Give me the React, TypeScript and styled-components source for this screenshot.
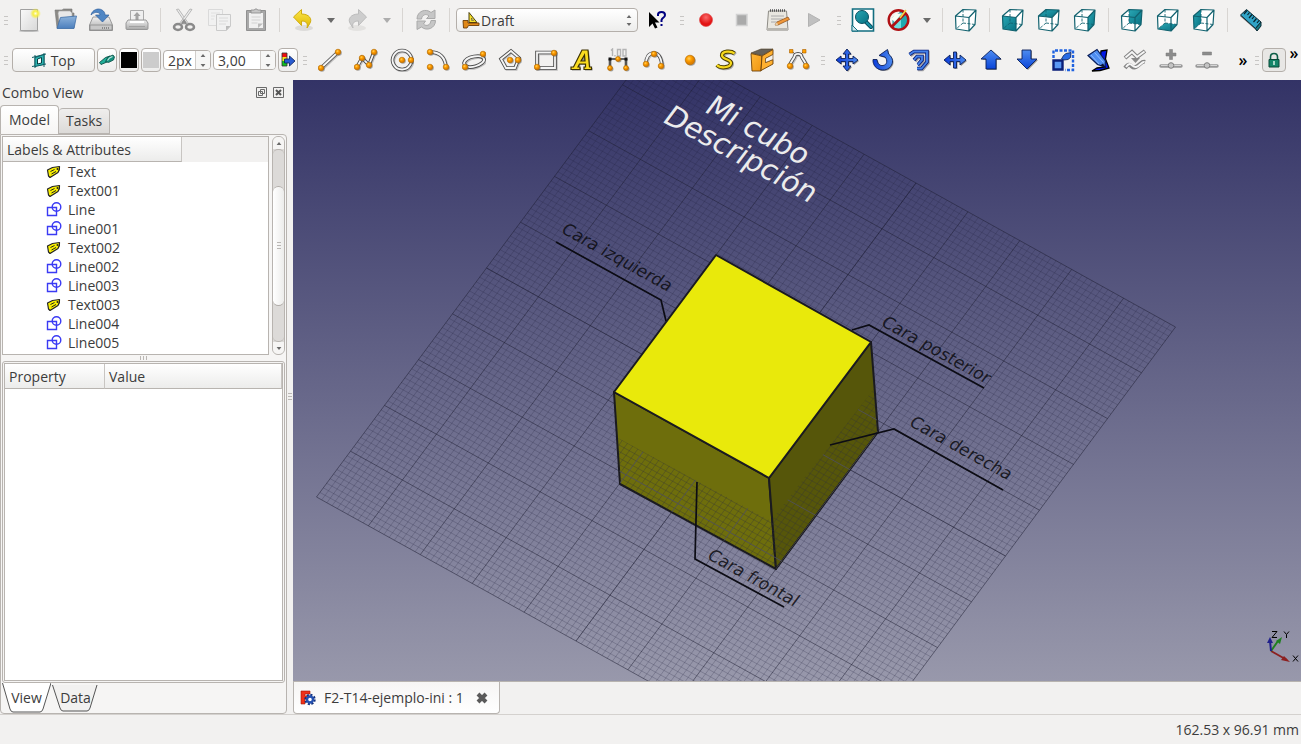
import React, { ReactNode, useState } from "react";
import styled, { createGlobalStyle, css } from "styled-components";

const GlobalStyle = createGlobalStyle`
  *, *::before, *::after { box-sizing: border-box; }
  body {
    margin: 0;
    background: #f2f1f0;
    color: #3c3c3c;
    font-family: "Open Sans", "Noto Sans", sans-serif;
    font-size: 14px;
    line-height: 19px;
  }
  button, input, select {
    font: inherit;
    color: inherit;
    margin: 0;
    padding: 0;
  }
`;

/* ---------- layout ---------- */

const Window = styled.div`
  display: flex;
  flex-direction: column;
  height: 100vh;
  overflow: hidden;
`;

const Toolbar = styled.div`
  display: flex;
  align-items: center;
  height: 40px;
  flex: none;
  overflow: hidden;
`;

const Workspace = styled.main`
  display: flex;
  flex: 1;
  min-height: 0;
`;

const Dock = styled.aside`
  display: flex;
  flex-direction: column;
  width: 287px;
  flex: none;
`;

const VerticalSplitter = styled.div`
  display: flex;
  align-items: center;
  justify-content: center;
  width: 6px;
  flex: none;
`;

const Documents = styled.section`
  display: flex;
  flex-direction: column;
  flex: 1;
  min-width: 0;
`;

const StatusBar = styled.footer`
  display: flex;
  align-items: center;
  justify-content: flex-end;
  height: 30px;
  flex: none;
  padding-right: 2px;
  border-top: 1px solid #d4d1ce;
`;

/* ---------- toolbar parts ---------- */

const Handle = styled.span<{ $width: number }>`
  display: block;
  flex: none;
  width: ${(p) => p.$width}px;
  height: 9px;
  background: repeating-linear-gradient(#c8c6c4 0 1px, transparent 1px 4px) center / 4px 9px no-repeat;
`;

const Separator = styled.span`
  flex: none;
  width: 1px;
  height: 24px;
  margin: 0 5px;
  background: #d8d5d2;
`;

const ToolButton = styled.button<{ $narrow?: boolean }>`
  display: flex;
  align-items: center;
  justify-content: center;
  flex: none;
  width: ${(p) => (p.$narrow ? 20 : 36)}px;
  height: 36px;
  border: 0;
  background: none;
`;

const raised = css`
  border: 1px solid #b4afaa;
  border-radius: 4px;
  background: linear-gradient(#ffffff, #ededec);
`;

const PlaneButton = styled.button`
  ${raised}
  display: flex;
  align-items: center;
  justify-content: center;
  gap: 4px;
  width: 83px;
  height: 24px;
`;

const SmallButton = styled.button`
  ${raised}
  display: flex;
  align-items: center;
  justify-content: center;
  flex: none;
  width: 20px;
  height: 24px;
`;

const LockButton = styled(SmallButton)`
  width: 24px;
  background: #e8e7e5;
`;

const Swatch = styled.span<{ $color: string }>`
  flex: none;
  width: 16px;
  height: 16px;
  background: ${(p) => p.$color};
`;

const DraftOptions = styled.div`
  display: flex;
  align-items: center;
  gap: 2px;
  flex: none;
`;

const SpinFrame = styled.div<{ $width: number }>`
  display: flex;
  width: ${(p) => p.$width}px;
  height: 20px;
  border: 1px solid #b4afaa;
  border-radius: 4px;
  background: #ffffff;
  overflow: hidden;
`;

const SpinInput = styled.input`
  flex: 1;
  min-width: 0;
  border: 0;
  padding-left: 4px;
  outline: 0;
  background: none;
`;

const SpinArrows = styled.div`
  display: flex;
  flex-direction: column;
  justify-content: space-between;
  width: 15px;
  padding: 3px 0 2px;
  border-left: 1px solid #d0cdca;
  background: #f6f6f5;
`;

const SpinButton = styled.button`
  display: flex;
  justify-content: center;
  border: 0;
  background: none;
`;

const Combo = styled.label`
  position: relative;
  display: flex;
  align-items: center;
  flex: none;
  width: 182px;
  height: 24px;
  margin: 0 1px;
  ${raised}
`;

const ComboIcon = styled.span`
  position: absolute;
  left: 5px;
  display: flex;
  pointer-events: none;
`;

const ComboArrows = styled.span`
  position: absolute;
  right: 5px;
  display: flex;
  flex-direction: column;
  gap: 5px;
  pointer-events: none;
`;

const ComboSelect = styled.select`
  appearance: none;
  width: 100%;
  height: 100%;
  padding-left: 24px;
  border: 0;
  outline: 0;
  background: none;
`;

const Overflow = styled.button`
  flex: none;
  width: 26px;
  height: 36px;
  padding-left: 10px;
  border: 0;
  background: none;
  color: #000000;
  font-size: 16px;
  font-weight: 600;
`;

const CornerOverflow = styled(Overflow)`
  align-self: flex-start;
  width: 16px;
  height: 26px;
  padding-left: 0;
`;

/* ---------- dock parts ---------- */

const DockTitle = styled.header`
  display: flex;
  align-items: center;
  gap: 6px;
  height: 25px;
  flex: none;
  padding: 0 3px 0 2px;
`;

const DockName = styled.h2`
  flex: 1;
  margin: 0;
  font-size: 14px;
  font-weight: 400;
`;

const DockButton = styled.button`
  display: flex;
  width: 11px;
  height: 11px;
  border: 0;
  background: none;
`;

const DockTabs = styled.div`
  display: flex;
  align-items: flex-end;
  height: 29px;
  flex: none;
`;

const DockTab = styled.button<{ $active: boolean }>`
  height: ${(p) => (p.$active ? 29 : 26)}px;
  padding: 0 ${(p) => (p.$active ? 8 : 7)}px 1px;
  border: 1px solid #b8b4b0;
  border-radius: 4px 4px 0 0;
  border-bottom-width: ${(p) => (p.$active ? 0 : 1)}px;
  border-left-width: ${(p) => (p.$active ? 1 : 0)}px;
  background: ${(p) => (p.$active ? "linear-gradient(#ffffff, #f6f5f4)" : "linear-gradient(#efeeed, #dcdad8)")};
`;

const DockPane = styled.div`
  display: flex;
  flex-direction: column;
  flex: 1;
  min-height: 0;
  padding: 1px 1px 0;
  border: 1px solid #b8b4b0;
  border-radius: 0 4px 4px 4px;
  background: #f6f5f4;
`;

const TreeFrame = styled.div`
  display: flex;
  gap: 3px;
  height: 219px;
  flex: none;
`;

const Tree = styled.div`
  flex: 1;
  border: 1px solid #b8b4b0;
  background: #ffffff;
  overflow: hidden;
`;

const TreeHeader = styled.div`
  height: 25px;
  background: #f2f1f0;
`;

const TreeColumn = styled.div`
  width: 179px;
  height: 25px;
  padding: 3px 4px;
  border-right: 1px solid #c8c5c2;
  border-bottom: 1px solid #b8b4b0;
  background: linear-gradient(#ffffff, #ececeb);
`;

const TreeList = styled.ul`
  margin: 0;
  padding: 0;
  list-style: none;
`;

const TreeItem = styled.li`
  display: flex;
  align-items: center;
  gap: 6px;
  height: 19px;
  padding-left: 43px;
`;

const ScrollBar = styled.div`
  display: flex;
  flex-direction: column;
  width: 13px;
  border: 1px solid #b8b4b0;
  border-radius: 6px;
  background: #dcdad8;
  overflow: hidden;
`;

const ScrollButton = styled.button`
  display: flex;
  align-items: center;
  justify-content: center;
  height: 12px;
  border: 0;
  background: #f6f5f4;
`;

const ScrollTrack = styled.div`
  flex: 1;
  padding-top: 36px;
  border: 1px solid #b8b4b0;
  border-width: 1px 0;
  border-radius: 5px;
`;

const ScrollThumb = styled.div`
  display: flex;
  align-items: center;
  justify-content: center;
  height: 120px;
  border: 1px solid #b0aca8;
  border-width: 1px 0;
  border-radius: 6px;
  background: linear-gradient(90deg, #ffffff, #ececeb);
`;

const Splitter = styled.div`
  display: flex;
  align-items: center;
  justify-content: center;
  height: 6px;
  flex: none;
`;

const Grip = styled.span<{ $vertical?: boolean }>`
  width: ${(p) => (p.$vertical ? 4 : 8)}px;
  height: ${(p) => (p.$vertical ? 8 : 4)}px;
  background: repeating-linear-gradient(${(p) => (p.$vertical ? "180deg" : "90deg")}, #bab7b4 0 1px, transparent 1px 3px);
`;

const PropertyFrame = styled.div`
  flex: 1;
  min-height: 0;
  padding: 1px;
  border: 1px solid #b8b4b0;
  border-radius: 3px;
`;

const PropertyPanel = styled.div`
  height: 100%;
  border: 1px solid #b8b4b0;
  background: #ffffff;
`;

const PropertyTable = styled.table`
  width: 100%;
  border-collapse: separate;
  border-spacing: 0;
  table-layout: fixed;
`;

const PropertyHead = styled.th<{ $width?: number }>`
  width: ${(p) => (p.$width ? `${p.$width}px` : "auto")};
  height: 25px;
  padding: 0 4px;
  border-right: 1px solid #c8c5c2;
  border-bottom: 1px solid #b8b4b0;
  background: linear-gradient(#ffffff, #ececeb);
  font-weight: 400;
  text-align: left;
`;

const PropertyTabs = styled.div`
  display: flex;
  height: 30px;
  flex: none;
`;

const PropertyTab = styled.button`
  position: relative;
  width: 49px;
  height: 28px;
  border: 0;
  background: none;
`;

const TabShape = styled.svg`
  position: absolute;
  left: 0;
  top: 0;
`;

const TabText = styled.span`
  position: relative;
`;

/* ---------- document view ---------- */

const Viewport = styled.div`
  position: relative;
  flex: 1;
  min-height: 0;
  background: linear-gradient(#333366, #9898ab);
  overflow: hidden;
`;

const Scene = styled.svg`
  display: block;
  width: 100%;
  height: 100%;
`;

const AxisCross = styled.svg`
  position: absolute;
  right: 0;
  bottom: 12px;
`;

const DocumentTabs = styled.div`
  display: flex;
  height: 33px;
  flex: none;
  border-top: 1px solid #b8b4b0;
`;

const DocumentTab = styled.div`
  display: flex;
  align-items: center;
  gap: 8px;
  width: 207px;
  height: 32px;
  padding: 0 10px 0 6px;
  border: 1px solid #b8b4b0;
  border-top: 0;
  border-radius: 0 0 4px 4px;
  background: linear-gradient(#f6f5f4, #ffffff);
`;

const DocumentName = styled.button`
  flex: 1;
  border: 0;
  background: none;
  text-align: left;
  white-space: nowrap;
`;

const CloseButton = styled.button`
  display: flex;
  border: 0;
  background: none;
`;

/* ---------- icons ---------- */

const Svg = ({ children, size = 24, box = 24 }: { children: ReactNode; size?: number; box?: number }) => (
  <svg width={size} height={size} viewBox={`0 0 ${box} ${box}`} aria-hidden="true">
    {children}
  </svg>
);

const Caret = ({ up, small, color = "#6a6a6a" }: { up?: boolean; small?: boolean; color?: string }) => (
  <svg width={small ? 6 : 8} height={small ? 3 : 5} viewBox="0 0 8 5" aria-hidden="true">
    <path d={up ? "M4 0 8 5H0z" : "M0 0h8L4 5z"} fill={color} />
  </svg>
);

const HiddenDefs = styled.svg`
  position: absolute;
`;

const Defs = () => (
  <HiddenDefs width="0" height="0" aria-hidden="true">
    <defs>
      <linearGradient id="paper" x1="0" y1="0" x2="1" y2="1">
        <stop offset="0" stopColor="#fafafa" />
        <stop offset="1" stopColor="#d8d8d8" />
      </linearGradient>
      <radialGradient id="glow">
        <stop offset="0" stopColor="#fffde0" />
        <stop offset=".45" stopColor="#f6ee40" />
        <stop offset="1" stopColor="#f6ee40" stopOpacity="0" />
      </radialGradient>
      <linearGradient id="folder" x1="0" y1="0" x2="0" y2="1">
        <stop offset="0" stopColor="#8fb4dc" />
        <stop offset="1" stopColor="#4c7fbd" />
      </linearGradient>
      <linearGradient id="metal" x1="0" y1="0" x2="0" y2="1">
        <stop offset="0" stopColor="#f0f0f0" />
        <stop offset="1" stopColor="#a8a8a8" />
      </linearGradient>
      <linearGradient id="gold" x1="0" y1="0" x2="0" y2="1">
        <stop offset="0" stopColor="#fbe64c" />
        <stop offset="1" stopColor="#e0b800" />
      </linearGradient>
      <linearGradient id="blue" x1="0" y1="0" x2="1" y2="0">
        <stop offset="0" stopColor="#0b3bd8" />
        <stop offset="1" stopColor="#4d8cf0" />
      </linearGradient>
      <linearGradient id="blueDown" x1="0" y1="0" x2="0" y2="1">
        <stop offset="0" stopColor="#4d8cf0" />
        <stop offset="1" stopColor="#0b45d8" />
      </linearGradient>
      <linearGradient id="teal" x1="0" y1="0" x2="1" y2="1">
        <stop offset="0" stopColor="#2aa7b4" />
        <stop offset="1" stopColor="#077182" />
      </linearGradient>
      <linearGradient id="orange" x1="0" y1="0" x2="1" y2="1">
        <stop offset="0" stopColor="#ffb838" />
        <stop offset="1" stopColor="#f09410" />
      </linearGradient>
      <radialGradient id="dot" cx=".4" cy=".35">
        <stop offset="0" stopColor="#ffd060" />
        <stop offset=".5" stopColor="#ffa000" />
        <stop offset="1" stopColor="#e08000" />
      </radialGradient>
      <radialGradient id="record" cx=".5" cy=".3">
        <stop offset="0" stopColor="#fa6a6a" />
        <stop offset="1" stopColor="#e21414" />
      </radialGradient>
    </defs>
  </HiddenDefs>
);

const NewIcon = () => (
  <Svg>
    <ellipse cx="12" cy="23" rx="10" ry="1" fill="#bbb" />
    <path d="M3.500 1.500h17v21h-17z" fill="url(#paper)" stroke="#a0a0a0" />
    <circle cx="18.500" cy="5.500" r="5.500" fill="url(#glow)" />
  </Svg>
);

const OpenIcon = () => (
  <Svg>
    <path d="M2 2h7l1.500-1H19v4h2v15H4z" fill="#8b8985" stroke="#777" strokeWidth=".6" />
    <path d="M5 5 6 3h11l2 2v8H6z" fill="#e8e8e8" stroke="#aaa" strokeWidth=".6" />
    <path d="M7.500 9.500 23.500 8 21 20.500H4z" fill="url(#folder)" stroke="#3f6ea8" strokeWidth=".8" />
  </Svg>
);

const SaveIcon = () => (
  <Svg>
    <path d="M4 9h16l3.500 8v5.500H.5V17z" fill="url(#metal)" stroke="#888" strokeWidth=".8" />
    <path d="M1 17h22v5H1z" fill="#c8c8c8" stroke="#8a8a8a" strokeWidth=".8" />
    <path d="M13 20h8" stroke="#8a8a8a" strokeWidth="2" strokeDasharray="1 1" />
    <path d="M2 7C3 2 9-.5 13 2c2 1 3 3 3 5h4l-6.500 7L6.500 7H11c0-3-5-4-9 0z" fill="#4f86c4" stroke="#2f5f9c" strokeWidth=".7" />
  </Svg>
);

const PrintIcon = () => (
  <Svg>
    <path d="M5.500 2.500h13V14h-13z" fill="#efefef" stroke="#aaa" />
    <path d="m12 4 3.500 4h-2v4h-3V8h-2z" fill="#a2a2a2" />
    <path d="M3 12h18l2 3v5.500q0 1-1 1H2q-1 0-1-1V15z" fill="url(#metal)" stroke="#909090" strokeWidth=".9" />
    <path d="M5 14h14" stroke="#fff" strokeWidth="2" />
    <path d="M4 18.500h16" stroke="#a2a2a2" />
  </Svg>
);

const CutIcon = () => (
  <Svg>
    <path d="M4.500 1.500 15 17l1.500-1.500L6.500 1z" fill="#ececec" stroke="#aaa" strokeWidth=".8" />
    <path d="M20 1.500 9 17l-1.500-1.500L18 1z" fill="#ececec" stroke="#aaa" strokeWidth=".8" />
    <path d="m10 16 2-3 2 3" fill="none" stroke="#8f8f8f" strokeWidth="2.500" />
    <ellipse cx="6" cy="19" rx="4" ry="3" fill="none" stroke="#8a8a8a" strokeWidth="2.500" />
    <ellipse cx="18" cy="19" rx="4" ry="3" fill="none" stroke="#8a8a8a" strokeWidth="2.500" />
  </Svg>
);

const CopyIcon = () => (
  <Svg>
    <path d="M.500 1.500h14v16H.500z" fill="#f1f1f1" stroke="#dadada" />
    <path d="M3 5h9M3 8h4M3 11h3" stroke="#e0e0e0" />
    <path d="M8.500 6.500h14V18l-4 4.500h-10z" fill="#f1f1f1" stroke="#cacaca" />
    <path d="M11 10h9M11 13h9M11 16h7" stroke="#dadada" />
    <path d="M18 22.500V18h4.500z" fill="#bbb" />
  </Svg>
);

const PasteIcon = () => (
  <Svg>
    <path d="M2.500 2.500h19v20h-19z" fill="#a8a8a8" stroke="#909090" />
    <path d="M5 5h14v15H5z" fill="#f0f0f0" />
    <path d="M7.500 9h9M7.500 12h9M7.500 15h6" stroke="#d2d2d2" />
    <path d="M14 20v-4.500h5z" fill="#bcbcbc" />
    <path d="M7 5V2h3q2-2.500 4 0h3v3z" fill="#c6c6c6" stroke="#888" strokeWidth=".8" />
  </Svg>
);

const UndoIcon = () => (
  <Svg>
    <ellipse cx="13" cy="20" rx="9" ry="3" fill="#dcdbd9" />
    <path d="M10.500 1.500V6C18 6 22 11 18.500 16l-2.500 4c1-4 0-7-5.500-7v4.500L2.500 9z" fill="url(#gold)" stroke="#d0ac10" />
  </Svg>
);

const RedoIcon = () => (
  <Svg>
    <ellipse cx="10" cy="20" rx="9" ry="3" fill="#e3e2e0" />
    <path d="M11.500 1.500V6C4 6 0 11 3.500 16L6 20c-1-4 0-7 5.500-7v4.500L19.500 9z" fill="#cdcdcd" stroke="#bcbcbc" />
  </Svg>
);

const RefreshIcon = () => (
  <Svg>
    <path d="M3 11C3 3 12 0 17 4.500L21 2v8.500h-8.500L15 8c-3-3-7-1-7.500 3z" fill="#c6c6c6" stroke="#aaa" />
    <path d="M21.500 12.500c0 8-9 11-14 6.500L3 21.500V13h8.500L9.500 16c3 3 7 1 7.500-3.500z" fill="#c6c6c6" stroke="#aaa" />
  </Svg>
);

const DraftIcon = () => (
  <Svg size={18} box={18}>
    <path d="M7 1.500v10h8z" fill="#f6e02a" stroke="#4a4010" />
    <path d="m9.500 7 .1 2.500h2z" fill="#fff" stroke="#4a4010" strokeWidth=".6" />
    <path d="M1 9.500h5V12h11v2.500H6.500L5 17H1.500z" fill="#e08818" stroke="#6b3d08" strokeWidth=".9" />
  </Svg>
);

const WhatsThisIcon = () => (
  <Svg>
    <path d="M4 4v15l3.500-3.500L10 20.500l2.500-1L10 14.500h4.500z" fill="#000" />
    <path d="M13 8V6.500q0-2.500 3.500-2.500t3.500 3q0 1.500-1.500 2.500T16.500 12v2M16.500 16v2" fill="none" stroke="#000080" strokeWidth="2" />
  </Svg>
);

const RecordIcon = () => (
  <Svg>
    <circle cx="12" cy="12" r="6.500" fill="url(#record)" stroke="#d44" strokeWidth=".6" />
  </Svg>
);

const StopIcon = () => (
  <Svg>
    <path d="M6.500 6.500h10.500v11H6.500z" fill="#aaa" stroke="#d2d2d2" strokeWidth="1.500" />
  </Svg>
);

const NotesIcon = () => (
  <Svg>
    <path d="M2.500 3h18L22 22H1z" fill="#e9e7e0" stroke="#8e8c86" />
    <path d="M1 20h21v2.500H1z" fill="#b8b6b0" />
    <path d="M5 8h13M5 11h12M5 14h8" stroke="#aaa" />
    <path d="M4 2.500h16" stroke="#555" strokeWidth="2.500" strokeDasharray="1 1" />
    <path d="m9 17 2-3L22 9l1.500 2.500L12 17z" fill="#f0983a" stroke="#8a4a12" strokeWidth=".7" />
    <path d="m9 17 2-3 1 3z" fill="#e8d0a8" />
  </Svg>
);

const PlayIcon = () => (
  <Svg>
    <path d="M6.500 5.500v13L18 12z" fill="#c0c0c0" stroke="#b2b2b2" />
  </Svg>
);

const FitIcon = () => (
  <Svg>
    <path d="M1.500 1v22H22.500V1z" fill="#fff" stroke="#126e80" strokeWidth="1.600" />
    <path d="M1 23v-6l6 6z" fill="#cfe6ea" stroke="#126e80" />
    <path d="m14 13 6 6" stroke="#0c5262" strokeWidth="4" strokeLinecap="round" />
    <path d="m14 13 6 6" stroke="#1893a8" strokeWidth="2" strokeLinecap="round" />
    <circle cx="11" cy="9" r="6.500" fill="url(#teal)" stroke="#0c5262" />
  </Svg>
);

const DrawStyleIcon = () => (
  <Svg>
    <path d="m6 9 8-5 6 2v11l-8 5-6-2z" fill="#6fdde0" stroke="#15868c" />
    <path d="m14 10 6-4v11l-6 4z" fill="#1fa9b0" />
    <path d="m4 11 5-6 5 1-6 8z" fill="#fbfbf4" />
    <circle cx="11.500" cy="12" r="9.800" fill="none" stroke="#b01014" strokeWidth="2.400" />
    <path d="M18.500 5 4.500 19" stroke="#b01014" strokeWidth="2.600" />
    <path d="m19 2-6 8" stroke="#f4d840" strokeWidth="1.600" />
  </Svg>
);

const cubeFaces: Record<string, string> = {
  front: "M1.500 8 15 9.500V23L2 21z",
  top: "M1.500 8 15 9.500 22 2 9 1.500z",
  right: "M15 9.500 22 2l-1 14.500L15 23z",
  rear: "M9 1.500 22 2l-1 14.500L9 15z",
  bottom: "M2 21 15 23l6-6.500L9 15z",
  left: "M1.500 8 9 1.500V15L2 21z",
};

const CubeIcon = ({ face }: { face?: string }) => (
  <Svg>
    <path d="M1.500 8 9 1.500 22 2l-1 14.500L15 23 2 21z" fill="#fff" />
    {face && <path d={cubeFaces[face]} fill="url(#teal)" />}
    <path d="M9 1.500V15L2 21M9 15l12 1.500" fill="none" stroke="#12626f" strokeWidth=".9" strokeDasharray="3 1.500" />
    <path d="M1.500 8 9 1.500 22 2l-1 14.500L15 23 2 21zM1.500 8 15 9.500 22 2M15 9.500V23" fill="none" stroke="#12626f" strokeWidth="1.200" strokeLinejoin="round" />
  </Svg>
);

const MeasureIcon = () => (
  <Svg>
    <path d="M1 8 5 5l13 12 3 2-3 4z" fill="#111" opacity=".6" />
    <path d="M1.500 7 7.500 1.500 22 14l-5.500 6.500z" fill="#2fa3c6" stroke="#0d2c36" />
    <path d="m16.500 20.500 5.500-6.500v4l-4 5z" fill="#167a86" stroke="#0d2c36" />
    <path d="M8 2.500 5 6M10.500 4.500 8.500 7M13 6.500 10 10M15 8.500 13 11M17.500 10.500l-3 3.500M20 12.500 18 15" stroke="#06222c" strokeWidth="1.200" />
  </Svg>
);

/* A draft primitive: grey double outline with orange control points. */
const Outline = ({ d }: { d: string }) => (
  <>
    <path d={d} fill="none" stroke="#8c8c8c" strokeWidth="3.500" opacity=".5" transform="translate(1 1)" />
    <path d={d} fill="none" stroke="#4e4e4e" strokeWidth="3.600" />
    <path d={d} fill="none" stroke="#f6f6f6" strokeWidth="1.800" />
  </>
);

const Dots = ({ at, r = 2.8 }: { at: [number, number][]; r?: number }) => (
  <>
    {at.map(([x, y]) => (
      <g key={`${x},${y}`}>
        <circle cx={x + 1} cy={y + 1} r={r} fill="#555" opacity=".5" />
        <circle cx={x} cy={y} r={r} fill="url(#dot)" stroke="#b06a00" strokeWidth=".6" />
      </g>
    ))}
  </>
);

const DraftShape = ({ d, dots }: { d: string; dots: [number, number][] }) => (
  <Svg>
    <Outline d={d} />
    <Dots at={dots} />
  </Svg>
);

const TextIcon = () => (
  <Svg>
    <path
      d="M12 2h6l1.500 17h2v2.500H14V19h1.500v-3H9.500L8 19h2v2.500H1V19h2.500z"
      transform="translate(1 1)"
      fill="#555"
      opacity=".6"
    />
    <path
      d="M12 2h6l1.500 17h2v2.500H14V19h1.500v-3H9.500L8 19h2v2.500H1V19h2.500zM14.500 7 11 13h4z"
      fill="#fbdc20"
      stroke="#3c3000"
      strokeWidth="1.200"
    />
  </Svg>
);

const DimensionIcon = () => (
  <Svg>
    <path d="M5 2.500 6.500 1v7M9 7v1.500M11.500 1.500h3V8h-3zM17 1.500h3V8h-3z" fill="none" stroke="#b4b4b4" strokeWidth="1.400" />
    <path d="M4 11v9M20 11v9" stroke="#555" strokeWidth="2.600" />
    <path d="M3 11h18" stroke="#333" strokeWidth="1.500" />
    <path d="M2.500 9.500h3v3h-3zM18.500 9.500h3v3h-3z" fill="#111" />
    <Dots at={[[4, 20], [20, 20], [12, 11]]} r={2.5} />
  </Svg>
);

const ShapeStringIcon = () => (
  <Svg>
    <path d="M20.500 5.500C17 2.500 8 3 8 7.500c0 4 10 3.500 9 8C16 20 6 20.500 3 17" fill="none" stroke="#777" strokeWidth="4" opacity=".6" transform="translate(1 1)" />
    <path d="M20.500 5.500C17 2.500 8 3 8 7.500c0 4 10 3.500 9 8C16 20 6 20.500 3 17" fill="none" stroke="#4a3d00" strokeWidth="4.200" />
    <path d="M20.500 5.500C17 2.500 8 3 8 7.500c0 4 10 3.500 9 8C16 20 6 20.500 3 17" fill="none" stroke="#f6d81c" strokeWidth="2.200" />
  </Svg>
);

const FacebinderIcon = () => (
  <Svg>
    <path d="M1 5 11 1h12l-11 6.500z" fill="#66625a" stroke="#4a3a20" strokeWidth=".6" />
    <path d="M1 5.500 12 8 11 23H2z" fill="url(#orange)" stroke="#6b4008" strokeWidth=".9" />
    <path d="m12 8 11-6.500V6.500L15.500 10.500v4L23 11.500V16l-12 6.500z" fill="#ffb030" stroke="#6b4008" strokeWidth=".9" />
    <path d="M15.500 10.500 23 6.500v5l-7.500 3z" fill="#f2f1f0" stroke="#6b4008" strokeWidth=".6" />
  </Svg>
);

const BezierIcon = () => (
  <Svg>
    <path d="M5.500 3 9 6M18 3l-3 3" stroke="#555" />
    <Outline d="M4 18c0-5 4-6 5-11 1.500-1.500 4.500-1.500 6 0 1 5 5 6 5 11" />
    <path d="M3.500 1.500h3.500V5H3.500zM16.500 1.500H20V5h-3.500z" fill="#ffa000" stroke="#a86000" strokeWidth=".6" />
    <Dots at={[[4, 18], [20, 18]]} />
  </Svg>
);

const Arrow = ({ d, fill = "url(#blue)" }: { d: string; fill?: string }) => (
  <Svg>
    <path d={d} transform="translate(1 1)" fill="#333" opacity=".5" />
    <path d={d} fill={fill} stroke="#0a1e58" strokeWidth=".9" strokeLinejoin="round" />
  </Svg>
);

const OffsetIcon = () => {
  const band = "M2.500 6.500 7 3.500h13V14l-5.500 6.500H10M7 12l3-3.500h5V12l-3.500 4-1 .500";
  return (
    <Svg>
      <path d={band} fill="none" stroke="#333" strokeWidth="3.500" opacity=".4" transform="translate(1 1)" />
      <path d={band} fill="none" stroke="#0a1e78" strokeWidth="3.600" />
      <path d={band} fill="none" stroke="#4482ea" strokeWidth="1.900" />
    </Svg>
  );
};

const ScaleIcon = () => (
  <Svg>
    <path d="M2.500 10V2.500H22V22h-8" fill="none" stroke="#1f62e0" strokeWidth="2.400" strokeDasharray="3 1.500" />
    <path d="M2.500 12.500h9v9h-9z" fill="#5a98f4" stroke="#0a1e78" strokeWidth="2.400" />
    <path d="M10.500 11 12.500 7.500 15 5.500l5-1-.500 5-2.500 2-4 .500z" fill="#2a6ce4" stroke="#0a1e58" strokeWidth=".8" />
  </Svg>
);

const EditIcon = () => (
  <Svg>
    <path d="m14 3 6-1-1.500 9L22 20l-9 2.500L5 23l5-3 8-1-5-8z" fill="#0018e8" stroke="#000" strokeWidth="1.300" />
    <path d="M1 7.500 10 1.500l8.500 11.500-.500 6-7.500-2.500z" fill="#4d8cf0" stroke="#0a1e58" strokeWidth="1.200" />
    <path d="m4 7 8 9M7.500 4.500l9 10" stroke="#8fbcff" />
    <path d="m16 15.500 3 4.500-6-2.500z" fill="#0a1438" />
  </Svg>
);

const WireSplineIcon = () => (
  <Svg>
    <path d="M8 10h9l-4.500 5z" fill="#8a8a8a" />
    <path d="m2 10 7-6 5 5 8-6M2 20c6-8 6 2 11-1s6-6 9-5" fill="none" stroke="#858585" strokeWidth="4" />
    <path d="m2.500 9.500 6.500-5.500 5 5 7.500-5.500M3 19c5-7 6 1 10 0s6-6 8.500-5" fill="none" stroke="#f6f6f6" strokeWidth="2" />
  </Svg>
);

const PointEditIcon = ({ add }: { add?: boolean }) => (
  <Svg>
    <path d={add ? "M10.500 1.500h3v3.500h3.500v3h-3.500v3.500h-3V8H7V5h3.500z" : "M7.500 4h9v3h-9z"} fill="#8c8c8c" stroke="#7a7a7a" strokeWidth=".5" />
    <path d="M2 18h20" stroke="#999" strokeWidth="3.400" strokeLinecap="round" />
    <path d="M2 17.500h20" stroke="#d6d6d6" />
    <circle cx="12" cy="17.500" r="2.800" fill="#c4c4c4" stroke="#808080" />
  </Svg>
);

const PlaneIcon = () => (
  <Svg size={15} box={15}>
    <path d="M0 4.500 14 1M0 13.500 14 11M3 2v13M12 0v14" stroke="#0c5a60" />
    <path d="m3 4.500 9-3v10l-9 2z" fill="#2bb5b2" stroke="#0c5a60" />
    <path d="m5.500 6 4-1.500v5.500l-4 1z" fill="#f4ffff" stroke="#083c40" />
  </Svg>
);

const ConstructionIcon = () => (
  <Svg size={16} box={16}>
    <path d="m.500 10.500 6-5L11 4l2 3-5 3-6 2.500z" fill="#1fae98" stroke="#0b4f46" strokeWidth=".9" />
    <path d="M6.500 9.500 9 5l5-2 1.500 2-1 3-5 2.500z" fill="#14917e" stroke="#0b4f46" strokeWidth=".8" />
    <path d="m8.500 8.500 2-2.500 3-1.500" fill="none" stroke="#bfe8df" strokeWidth="1.200" />
  </Svg>
);

const ApplyIcon = () => (
  <Svg size={16} box={16}>
    <path d="M2 1h5v4H2z" fill="#f01010" />
    <path d="M2 5h5v5H2z" fill="#f4e61c" />
    <path d="M2 9h5v5H2z" fill="#10c020" />
    <path d="M2 1h5v13H2z" fill="none" stroke="#333" strokeWidth=".8" />
    <path d="M4.500 7h5V4l5.500 5-5.500 5v-3h-5z" fill="#2a5cd0" stroke="#0a1e58" strokeWidth=".8" />
  </Svg>
);

const LockIcon = () => (
  <Svg size={16} box={16}>
    <path d="M4.500 7.500V5q0-3.500 3.500-3.500T11.500 5v2.500" fill="none" stroke="#0f5f48" strokeWidth="1.600" />
    <path d="M3 7.500h10V15H3z" fill="#16866a" stroke="#0a4a38" />
    <path d="M8 9v4" stroke="#d8f0e8" strokeWidth="1.500" />
  </Svg>
);

const TagIcon = () => (
  <Svg size={16} box={16}>
    <path d="m1.500 6 5-2.500 7-1q.5 3-1.500 6l-8 5-1.500-1.500z" fill="#f8f000" stroke="#222" strokeWidth="1.200" strokeLinejoin="round" />
    <path d="m4.500 7.500 4-2M5.500 10l4.500-2.500" stroke="#222" />
    <circle cx="11.500" cy="5" r="1" fill="#222" />
  </Svg>
);

const LineIcon = () => (
  <Svg size={16} box={16}>
    <path d="M1.500 5.500h9v8h-9z" fill="none" stroke="#3a3af4" strokeWidth="1.400" />
    <circle cx="10.500" cy="5" r="4.300" fill="none" stroke="#3a3af4" strokeWidth="1.400" />
  </Svg>
);

const FloatIcon = () => (
  <Svg size={11} box={11}>
    <path d="M.5.5h10v10H.5zM4.500 2.500h4v4h-4zM2.500 4.500h4v4h-4z" fill="none" stroke="#6a6a6a" />
  </Svg>
);

const DockCloseIcon = () => (
  <Svg size={11} box={11}>
    <path d="M.5.5h10v10H.5z" fill="none" stroke="#6a6a6a" />
    <path d="m3 3 5 5M8 3 3 8" stroke="#555" strokeWidth="2" />
  </Svg>
);

const FreeCadIcon = () => (
  <Svg size={16} box={16}>
    <path d="M1 1h9v3H5v2h3v3H5v5H1z" fill="#f03018" stroke="#a01808" strokeWidth=".6" />
    <circle cx="10" cy="9.500" r="4.500" fill="none" stroke="#12307c" strokeWidth="2.400" strokeDasharray="2 1.500" />
    <circle cx="10" cy="9.500" r="3" fill="#fff" stroke="#2450b0" strokeWidth="2.400" />
  </Svg>
);

const CloseIcon = () => (
  <Svg size={14} box={14}>
    <path d="m3 3 8 8M11 3l-8 8" stroke="#5a5a5a" strokeWidth="4" />
  </Svg>
);

/* ---------- toolbars ---------- */

type Tool = [string, ReactNode];

const Tools = ({ items }: { items: Tool[] }) => (
  <>
    {items.map(([label, icon]) => (
      <ToolButton key={label} type="button" aria-label={label}>
        {icon}
      </ToolButton>
    ))}
  </>
);

const MenuArrow = ({ label, color }: { label: string; color?: string }) => (
  <ToolButton type="button" $narrow aria-label={label}>
    <Caret color={color} />
  </ToolButton>
);

const drawTools: Tool[] = [
  ["Line", <DraftShape d="M3 20 20 4" dots={[[3, 20], [20, 4]]} />],
  ["Wire", <DraftShape d="m3 19 5-9 7 7 5-13" dots={[[3, 19], [8, 10], [15, 17], [20, 4]]} />],
  ["Circle", <DraftShape d="M12 2.500a9.500 9.500 0 1 0 .1 0z" dots={[[12, 12], [21, 12]]} />],
  ["Arc", <DraftShape d="M4 4q15 0 16 16" dots={[[4, 4], [4, 19], [20, 19]]} />],
  ["Ellipse", <DraftShape d="M2 15c2-7 18-9 20-4s-18 13-20 4z" dots={[[3, 19], [21, 6]]} />],
  ["Polygon", <DraftShape d="M13 3 21 10l-4 10-9 0-5-9z" dots={[[12, 12], [20, 12]]} />],
  ["Rectangle", <DraftShape d="M3 4.500h18V20H3z" dots={[[3, 19], [20, 5]]} />],
  ["Text", <TextIcon />],
  ["Dimension", <DimensionIcon />],
  ["B-spline", <DraftShape d="M4 16C4 9 7 5 12 5s7 4 8 12" dots={[[4, 16], [12, 6], [19, 18]]} />],
  ["Point", <Svg><Dots at={[[12, 12]]} r={4.8} /></Svg>],
  ["Shape from text", <ShapeStringIcon />],
  ["Facebinder", <FacebinderIcon />],
  ["Bezier curve", <BezierIcon />],
];

const modifyTools: Tool[] = [
  ["Move", <Arrow d="m12 1 4 5h-2.500v4.500H18V8l5 4-5 4v-2.500h-4.500V18H16l-4 5-4-5h2.500v-4.500H6V16l-5-4 5-4v2.500h4.500V6H8z" />],
  ["Rotate", <Arrow d="M2 11.500H6C6.500 16 9 18 12 17.500c4-.5 5-5 2-8.500L8 7.500 16.500 1.500 17.500 6c5 4 5 9 2 12.500-3 4-9 4.500-13 2C3 18.500 1.800 15 2 11.500z" />],
  ["Offset", <OffsetIcon />],
  ["Trimex", <Arrow d="m1 12 6-5v3.500h3.500V4h3v6.500H17V7l6 5-6 5v-3.500h-3.500V20h-3v-6.500H7V17z" />],
  ["Upgrade", <Arrow d="m12 2 10 9h-5v10H7V11H2z" fill="url(#blueDown)" />],
  ["Downgrade", <Arrow d="M7 2h9v9h6L12 21 2 11h5z" fill="url(#blueDown)" />],
  ["Scale", <ScaleIcon />],
  ["Edit", <EditIcon />],
  ["Wire to B-spline", <WireSplineIcon />],
  ["Add point", <PointEditIcon add />],
  ["Remove point", <PointEditIcon />],
];

const MainToolbar = () => (
  <Toolbar role="toolbar" aria-label="Standard">
    <Handle $width={11} />
    <Tools items={[["New", <NewIcon />], ["Open", <OpenIcon />], ["Save", <SaveIcon />], ["Print", <PrintIcon />]]} />
    <Separator />
    <Tools items={[["Cut", <CutIcon />], ["Copy", <CopyIcon />], ["Paste", <PasteIcon />]]} />
    <Separator />
    <Tools items={[["Undo", <UndoIcon />]]} />
    <MenuArrow label="Undo history" />
    <Tools items={[["Redo", <RedoIcon />]]} />
    <MenuArrow label="Redo history" color="#adadad" />
    <Separator />
    <Tools items={[["Refresh", <RefreshIcon />]]} />
    <Separator />
    <Combo>
      <ComboIcon>
        <DraftIcon />
      </ComboIcon>
      <ComboSelect aria-label="Workbench" defaultValue="Draft">
        <option>Draft</option>
      </ComboSelect>
      <ComboArrows>
        <Caret up small />
        <Caret small />
      </ComboArrows>
    </Combo>
    <Tools items={[["What's this?", <WhatsThisIcon />]]} />
    <Handle $width={13} />
    <Tools items={[["Record macro", <RecordIcon />], ["Stop recording", <StopIcon />], ["Macros", <NotesIcon />], ["Run macro", <PlayIcon />]]} />
    <Handle $width={13} />
    <Tools items={[["Fit all", <FitIcon />], ["Draw style", <DrawStyleIcon />]]} />
    <MenuArrow label="Draw style menu" />
    <Separator />
    <Tools items={[["Axonometric", <CubeIcon />]]} />
    <Separator />
    <Tools items={[["Front", <CubeIcon face="front" />], ["Top", <CubeIcon face="top" />], ["Right", <CubeIcon face="right" />]]} />
    <Separator />
    <Tools items={[["Rear", <CubeIcon face="rear" />], ["Bottom", <CubeIcon face="bottom" />], ["Left", <CubeIcon face="left" />]]} />
    <Separator />
    <Tools items={[["Measure distance", <MeasureIcon />]]} />
  </Toolbar>
);

const Spin = ({ label, value, width }: { label: string; value: string; width: number }) => (
  <SpinFrame $width={width}>
    <SpinInput type="text" aria-label={label} defaultValue={value} />
    <SpinArrows>
      <SpinButton type="button" aria-label={`Increase ${label}`}>
        <Caret up small />
      </SpinButton>
      <SpinButton type="button" aria-label={`Decrease ${label}`}>
        <Caret small />
      </SpinButton>
    </SpinArrows>
  </SpinFrame>
);

const DraftToolbar = () => (
  <Toolbar role="toolbar" aria-label="Draft">
    <Handle $width={12} />
    <DraftOptions>
      <PlaneButton type="button">
        <PlaneIcon />
        Top
      </PlaneButton>
      <SmallButton type="button" aria-label="Construction mode">
        <ConstructionIcon />
      </SmallButton>
      <SmallButton type="button" aria-label="Line colour">
        <Swatch $color="#000000" />
      </SmallButton>
      <SmallButton type="button" aria-label="Face colour">
        <Swatch $color="#cccccc" />
      </SmallButton>
      <Spin label="line width" value="2px" width={48} />
      <Spin label="text size" value="3,00" width={63} />
      <SmallButton type="button" aria-label="Apply style">
        <ApplyIcon />
      </SmallButton>
    </DraftOptions>
    <Handle $width={14} />
    <Tools items={drawTools} />
    <Handle $width={13} />
    <Tools items={modifyTools} />
    <Overflow type="button">»</Overflow>
    <Handle $width={11} />
    <LockButton type="button" aria-label="Snap lock">
      <LockIcon />
    </LockButton>
    <CornerOverflow type="button">»</CornerOverflow>
  </Toolbar>
);

/* ---------- combo view ---------- */

const treeItems = ["Text", "Text001", "Line", "Line001", "Text002", "Line002", "Line003", "Text003", "Line004", "Line005"];

const ComboView = () => {
  const [tab, setTab] = useState("Model");
  return (
    <Dock>
      <DockTitle>
        <DockName>Combo View</DockName>
        <DockButton type="button" aria-label="Float">
          <FloatIcon />
        </DockButton>
        <DockButton type="button" aria-label="Close">
          <DockCloseIcon />
        </DockButton>
      </DockTitle>
      <DockTabs role="tablist">
        {["Model", "Tasks"].map((name) => (
          <DockTab key={name} type="button" role="tab" aria-selected={tab === name} $active={tab === name} onClick={() => setTab(name)}>
            {name}
          </DockTab>
        ))}
      </DockTabs>
      <DockPane>
        <TreeFrame>
          <Tree>
            <TreeHeader>
              <TreeColumn>Labels &amp; Attributes</TreeColumn>
            </TreeHeader>
            <TreeList>
              {treeItems.map((name) => (
                <TreeItem key={name}>
                  {name.startsWith("Text") ? <TagIcon /> : <LineIcon />}
                  {name}
                </TreeItem>
              ))}
            </TreeList>
          </Tree>
          <ScrollBar>
            <ScrollButton type="button" aria-label="Scroll up">
              <Caret up small />
            </ScrollButton>
            <ScrollTrack>
              <ScrollThumb>
                <Grip $vertical />
              </ScrollThumb>
            </ScrollTrack>
            <ScrollButton type="button" aria-label="Scroll down">
              <Caret small />
            </ScrollButton>
          </ScrollBar>
        </TreeFrame>
        <Splitter>
          <Grip />
        </Splitter>
        <PropertyFrame>
          <PropertyPanel>
            <PropertyTable>
              <thead>
                <tr>
                  <PropertyHead $width={100}>Property</PropertyHead>
                  <PropertyHead>Value</PropertyHead>
                </tr>
              </thead>
            </PropertyTable>
          </PropertyPanel>
        </PropertyFrame>
        <PropertyTabs role="tablist">
          <PropertyTab type="button" role="tab" aria-selected="true">
            <TabShape width="49" height="30" aria-hidden="true">
              <path d="M.5 0 8 26q1 3 3 3h27q2 0 3-3L49 0" fill="#ffffff" stroke="#555" />
            </TabShape>
            <TabText>View</TabText>
          </PropertyTab>
          <PropertyTab type="button" role="tab" aria-selected="false">
            <TabShape width="49" height="30" aria-hidden="true">
              <path d="M1.500 2 9 25q1 3 3 3h24q2 0 3-3l7-23" fill="#f2f1f0" stroke="#555" />
            </TabShape>
            <TabText>Data</TabText>
          </PropertyTab>
        </PropertyTabs>
      </DockPane>
    </Dock>
  );
};

/* ---------- 3D scene ---------- */

/* Scene coordinates: corner of the working plane and its two cell vectors. */
const origin = [23.5, 417];
const u = [51.9, 28.8];
const v = [34, -45.8];

const gridPoint = (a: number, b: number) =>
  `${(origin[0] + u[0] * a + v[0] * b).toFixed(2)} ${(origin[1] + u[1] * a + v[1] * b).toFixed(2)}`;

const gridLines = (keep: (i: number) => boolean) =>
  Array.from({ length: 101 }, (_, i) => i)
    .filter(keep)
    .map((i) => `M${gridPoint(i / 10, 0)}L${gridPoint(i / 10, 10)}M${gridPoint(0, i / 10)}L${gridPoint(10, i / 10)}`)
    .join("");

const minorGrid = gridLines((i) => i % 10 !== 0);
const majorGrid = gridLines((i) => i % 10 === 0);
const centreLines = gridLines((i) => i === 50);

const leaders = [
  "M263 162 368 220l5 21",
  "M559 250l17-5 115 63",
  "M537 365l64-16 109 61",
  "M404 402l-2 77 89 48",
];

const SceneText = styled.text<{ $title?: boolean }>`
  font-family: "DejaVu Sans", sans-serif;
  font-size: ${(p) => (p.$title ? 29 : 17)}px;
  fill: ${(p) => (p.$title ? "#ececec" : "#0c0c10")};
  fill-opacity: ${(p) => (p.$title ? 1 : 0.85)};
`;

const PlaneText = ({ x, y, title, children }: { x: number; y: number; title?: boolean; children: string }) => (
  <SceneText $title={title} transform={`translate(${x} ${y}) rotate(29) skewX(-8)`}>
    {children}
  </SceneText>
);

const SceneView = () => (
  <Viewport>
    <Scene viewBox="0 0 1008 601" preserveAspectRatio="xMidYMid slice" role="img" aria-label="Mi cubo">
      <defs>
        <clipPath id="belowPlane">
          <path d="M325 358 478 441 581 309 585 352 483 489 327 404z" />
        </clipPath>
      </defs>
      <g fill="none">
        <path d={minorGrid} stroke="#22223a" strokeOpacity=".22" />
        <path d={majorGrid} stroke="#1c1c30" strokeOpacity=".5" />
        <path d={centreLines} stroke="#14142a" strokeOpacity=".2" />
      </g>
      <g stroke="#1a1a20" strokeWidth="2" strokeLinejoin="round">
        <path d="M321 312 476 398l7 91-156-85z" fill="#6e6e0c" />
        <path d="M476 398 578 262l7 90-102 137z" fill="#56560a" />
        <path d="M423 175 578 262 476 398 321 312z" fill="#e9e90b" />
      </g>
      <g fill="none" clipPath="url(#belowPlane)">
        <path d={minorGrid} stroke="#34343c" strokeOpacity=".34" />
        <path d={majorGrid} stroke="#50505a" strokeOpacity=".9" />
      </g>
      <g fill="none" stroke="#0c0c14" strokeWidth="1.700">
        {leaders.map((d) => (
          <path key={d} d={d} />
        ))}
      </g>
      <PlaneText x={410} y={31} title>Mi cubo</PlaneText>
      <PlaneText x={368} y={41} title>Descripción</PlaneText>
      <PlaneText x={267} y={152}>Cara izquierda</PlaneText>
      <PlaneText x={587} y={245}>Cara posterior</PlaneText>
      <PlaneText x={615} y={345}>Cara derecha</PlaneText>
      <PlaneText x={413} y={478}>Cara frontal</PlaneText>
    </Scene>
    <AxisCross width="40" height="42" viewBox="0 0 40 42" aria-hidden="true">
      <path d="M10 24 26 33" stroke="#8c2020" strokeWidth="2" />
      <path d="m29 35-9-2 3-4z" fill="#8c2020" />
      <path d="m10 24 7-10" stroke="#1f8020" strokeWidth="2" />
      <path d="m21 10-2 7-4-3z" fill="#1f8020" />
      <path d="M10 24 9 14" stroke="#20208c" strokeWidth="2" />
      <path d="m9 10 3 6H6z" fill="#20208c" />
      <g fill="none" stroke="#000">
        <path d="M11 4.500h5l-5 6h5M23 4.500l2.500 3 2.500-3M25.500 7.500v3.500M32 28.500l5 6M37 28.500l-5 6" />
      </g>
    </AxisCross>
  </Viewport>
);

export default function App() {
  return (
    <Window>
      <GlobalStyle />
      <Defs />
      <MainToolbar />
      <DraftToolbar />
      <Workspace>
        <ComboView />
        <VerticalSplitter>
          <Grip $vertical />
        </VerticalSplitter>
        <Documents>
          <SceneView />
          <DocumentTabs>
            <DocumentTab>
              <FreeCadIcon />
              <DocumentName type="button">F2-T14-ejemplo-ini : 1</DocumentName>
              <CloseButton type="button" aria-label="Close document">
                <CloseIcon />
              </CloseButton>
            </DocumentTab>
          </DocumentTabs>
        </Documents>
      </Workspace>
      <StatusBar>162.53 x 96.91 mm</StatusBar>
    </Window>
  );
}
